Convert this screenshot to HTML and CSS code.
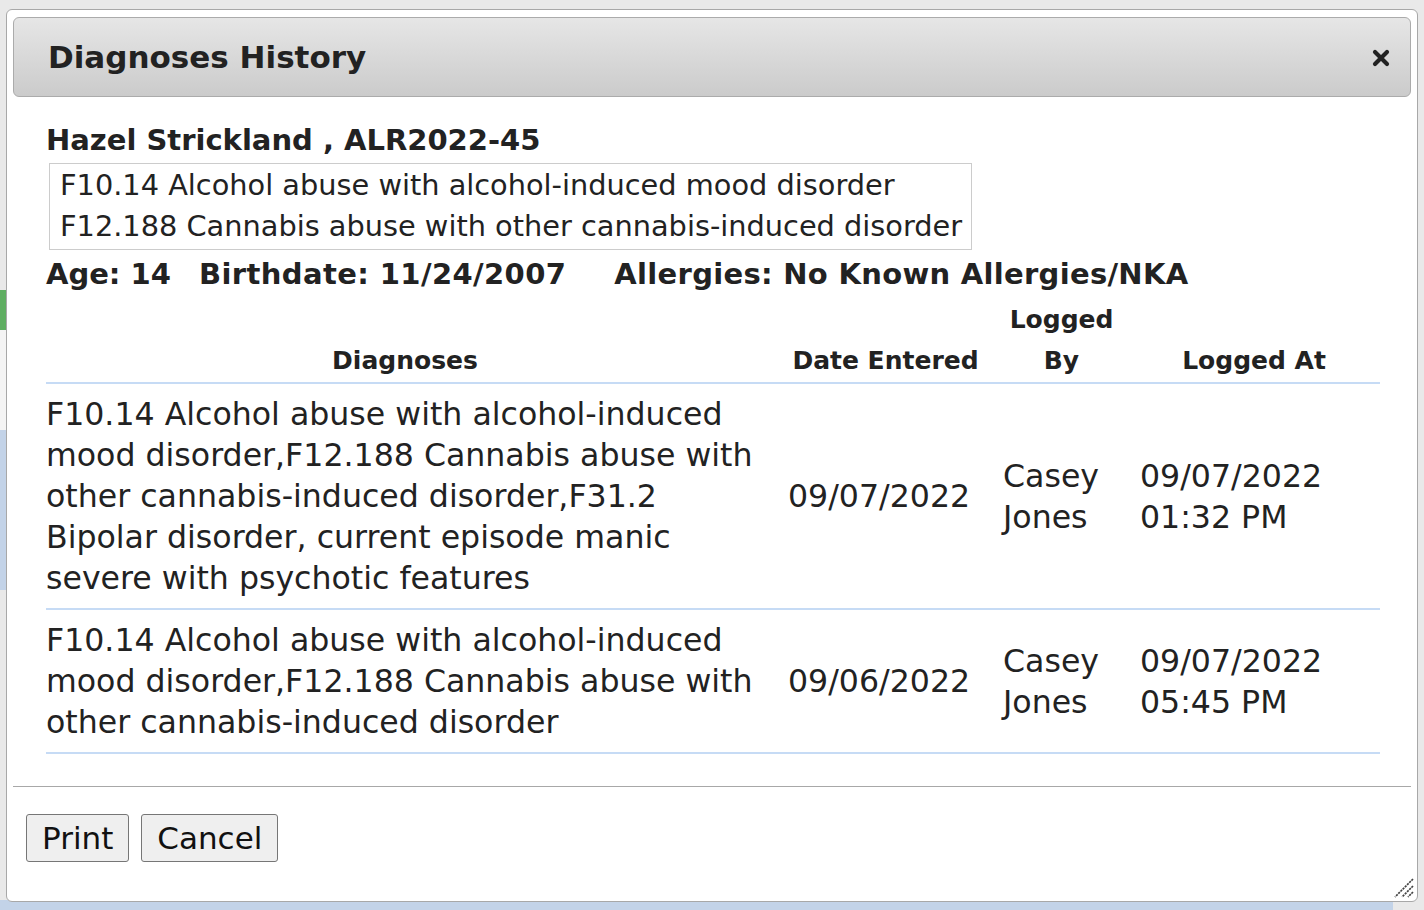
FILE: index.html
```html
<!DOCTYPE html>
<html lang="en">
<head>
  <meta charset="UTF-8" />
  <title>Diagnoses History</title>
  <link rel="stylesheet" href="styles.css">
</head>
<body>

<div class="backdrop">
  <div class="side">
    <div class="side-a"></div>
    <div class="side-b"></div>
    <div class="side-c"></div>
    <div class="side-d"></div>
  </div>
  <div class="bottom-strip"></div>
</div>

<div class="dialog">
  <div class="titlebar">
    <span class="title">Diagnoses History</span>
    <span class="close" title="Close">
      <svg width="18" height="18" viewBox="0 0 18 18"><path d="M3 3 L15 15 M15 3 L3 15" stroke="#222" stroke-width="4.2" stroke-linecap="round"/></svg>
    </span>
  </div>

  <div class="content">
    <div class="patient">Hazel Strickland , ALR2022-45</div>
    <div class="dx-box">
      F10.14 Alcohol abuse with alcohol-induced mood disorder<br />
      F12.188 Cannabis abuse with other cannabis-induced disorder
    </div>
    <div class="info">
      <span class="age">Age: 14</span>
      <span class="birth">Birthdate: 11/24/2007</span>
      <span class="allergies">Allergies: No Known Allergies/NKA</span>
    </div>

    <table class="history">
      <colgroup>
        <col class="c-dx" /><col class="c-date" /><col class="c-by" /><col class="c-at" />
      </colgroup>
      <tr>
        <th>Diagnoses</th><th>Date Entered</th><th>Logged By</th><th>Logged At</th>
      </tr>
      <tr>
        <td>F10.14 Alcohol abuse with alcohol-induced mood disorder,F12.188 Cannabis abuse with other cannabis-induced disorder,F31.2 Bipolar disorder, current episode manic severe with psychotic features</td>
        <td>09/07/2022</td>
        <td>Casey Jones</td>
        <td>09/07/2022 01:32 PM</td>
      </tr>
      <tr>
        <td>F10.14 Alcohol abuse with alcohol-induced mood disorder,F12.188 Cannabis abuse with other cannabis-induced disorder</td>
        <td>09/06/2022</td>
        <td>Casey Jones</td>
        <td>09/07/2022 05:45 PM</td>
      </tr>
    </table>
  </div>

  <div class="footer">
    <button class="btn">Print</button>
    <button class="btn">Cancel</button>
  </div>

  <span class="grip">
    <svg width="22" height="22" viewBox="0 0 22 22"><path d="M21 3 L3 21 M21 10 L10 21 M21 16 L16 21" stroke="#444" stroke-width="1.7" stroke-dasharray="2.2 0.9"/></svg>
  </span>
</div>

</body>
</html>
```

FILE: styles.css
```css
body { margin: 0; font-family: 'DejaVu Sans', Verdana, sans-serif; color: #222; background: #e9e9e9; }
.backdrop { height: 910px; position: relative; overflow: hidden; }
.side { width: 6px; display: flex; flex-direction: column; padding-top: 100px; }
.side-a { height: 190px; }
.side-b { height: 40px; background: #5fae62; }
.side-c { height: 100px; background: #f4f4f4; }
.side-d { height: 160px; background: #c3d3e8; }
.bottom-strip { position: absolute; left: 0; bottom: 0; width: 1393px; height: 10px; background: #c3d3e8; }

.dialog { position: absolute; left: 6px; top: 9px; width: 1412px; height: 893px; box-sizing: border-box; padding: 7px 6px 0; background: #fff; border: 1px solid #a8a8a8; border-radius: 6px; display: flex; flex-direction: column; }

.titlebar { height: 80px; flex: none; box-sizing: border-box; display: flex; align-items: center; justify-content: space-between; padding: 0 20px 0 34px; border: 1px solid #ababab; border-radius: 6px; background: linear-gradient(#e6e6e6, #cbcbcb); }
.title { font-size: 31px; font-weight: bold; color: #222; }
.close { display: flex; margin-top: 1px; }

.content { flex: 1; padding: 26px 31px 0 33px; }
.patient { font-size: 29px; font-weight: bold; line-height: 34px; }
.dx-box { display: inline-block; margin: 6px 0 0 3px; padding: 1px 9px 2px 10px; border: 1px solid #ccc; font-size: 28.8px; line-height: 41px; }
.info { font-size: 29px; font-weight: bold; line-height: 40px; margin-top: 4px; display: flex; }
.info .birth { margin-left: 28px; letter-spacing: 0.4px; }
.info .allergies { margin-left: 48px; letter-spacing: 0.3px; }

.history { width: 1334px; table-layout: fixed; border-collapse: collapse; margin-top: 5px; font-size: 31.6px; line-height: 41px; }
.c-dx { width: 730px; }
.c-date { width: 219px; }
.c-by { width: 133px; }
.c-at { width: 252px; }
.history th { font-size: 25px; font-weight: bold; text-align: center; vertical-align: bottom; padding: 0 12px 1px; border-bottom: 2px solid #c6dbf5; }
.history td { vertical-align: middle; padding: 10px 12px 9px; border-bottom: 2px solid #c6dbf5; }
.history th:first-child, .history td:first-child { padding-left: 0; }
.history td:nth-child(3), .history th:nth-child(3) { padding-left: 8px; padding-right: 8px; }

.footer { height: 115px; flex: none; box-sizing: border-box; border-top: 1px solid #a8a8a8; padding: 27px 0 0 13px; display: flex; align-items: flex-start; gap: 12px; }
.btn { font-family: 'DejaVu Sans', Verdana, sans-serif; font-size: 31px; height: 48px; padding: 0 15px; background: #efefef; color: #111; border: 1px solid #767676; border-radius: 3px; }

.grip { position: absolute; right: 3px; bottom: 3px; display: flex; }
```
